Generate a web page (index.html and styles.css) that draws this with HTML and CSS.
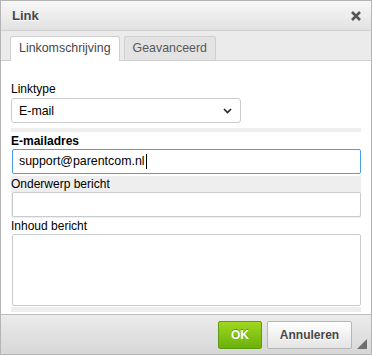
FILE: index.html
```html
<!DOCTYPE html>
<html lang="nl">
  <head>
    <meta charset="UTF-8" />
    <title>Link</title>
    <link rel="stylesheet" href="styles.css">
  </head>
  <body>
    <div class="dialog">
      <div class="titlebar">
        <span class="title">Link</span>
        <svg class="close" width="10" height="10" viewBox="0 0 10 10">
          <path d="M1 1 L9 9 M9 1 L1 9" stroke="#555" stroke-width="2.6" />
        </svg>
      </div>
      <div class="tabs">
        <div class="tab active">Linkomschrijving</div>
        <div class="tab">Geavanceerd</div>
      </div>
      <div class="content">
        <label class="lbl">Linktype</label>
        <div class="select">
          <span>E-mail</span>
          <svg width="9" height="6" viewBox="0 0 9 6">
            <path d="M1 1 L4.5 4.5 L8 1" fill="none" stroke="#222" stroke-width="1.6" />
          </svg>
        </div>
        <div class="group">
          <div class="row white">
            <label class="lbl bold">E-mailadres</label>
            <div class="field focus">support@parentcom.nl<span class="caret"></span></div>
          </div>
          <div class="row">
            <label class="lbl">Onderwerp bericht</label>
            <input class="field" type="text" />
          </div>
          <div class="row white last">
            <label class="lbl">Inhoud bericht</label>
            <textarea class="field area"></textarea>
          </div>
        </div>
      </div>
      <div class="footer">
        <button class="btn ok">OK</button>
        <button class="btn cancel">Annuleren</button>
        <div class="grip"></div>
      </div>
    </div>
  </body>
</html>
```

FILE: styles.css
```css
body {
  margin: 0;
  font-family: "Liberation Sans", Arial, sans-serif;
  font-size: 12px;
  color: #000;
}
.dialog {
  width: 372px;
  height: 355px;
  box-sizing: border-box;
  border: 1px solid #b4b4b4;
  display: flex;
  flex-direction: column;
  background: #fff;
}
.titlebar {
  height: 29px;
  border-bottom: 1px solid #d0d0d0;
  background: linear-gradient(#f7f7f7, #e2e2e2);
  display: flex;
  align-items: center;
  justify-content: space-between;
  padding: 0 10px 0 11px;
}
.title {
  font-size: 13px;
  font-weight: bold;
  color: #474747;
  text-shadow: 0 1px 0 #fff;
}
.tabs {
  height: 24px;
  padding: 5px 0 0 9px;
  background: #ebebeb;
  border-bottom: 1px solid #cfcfcf;
  display: flex;
  gap: 4px;
}
.tab {
  height: 23px;
  line-height: 23px;
  padding: 0 8px;
  border: 1px solid #cfcfcf;
  border-bottom: none;
  border-radius: 3px 3px 0 0;
  background: #e3e3e3;
  color: #595959;
  font-size: 12.4px;
}
.tab.active {
  height: 24px;
  background: #fff;
  color: #474747;
  margin-bottom: -1px;
}
.content {
  flex: 1;
  padding: 21px 10px 0 10px;
}
.lbl {
  display: block;
  line-height: 14px;
  color: #000;
}
.bold {
  font-weight: bold;
}
.select {
  margin-top: 2px;
  width: 230px;
  height: 25px;
  box-sizing: border-box;
  border: 1px solid #c9cccf;
  border-radius: 3px;
  display: flex;
  align-items: center;
  justify-content: space-between;
  padding: 0 8px 0 7px;
  font-size: 12.4px;
}
.group {
  margin-top: 5px;
  background: #eee;
  padding: 4px 0 5px 0;
}
.row {
  padding: 1px 0;
}
.row.white {
  background: #fff;
  padding: 2px 0;
}
.row.last {
  padding: 1px 0;
}
.field {
  display: block;
  margin: 1px 0 0 1px;
  width: 349px;
  height: 25px;
  box-sizing: border-box;
  border: 1px solid #c9cccf;
  border-radius: 2px;
  background: #fff;
  padding: 0 6px;
  font-family: "Liberation Sans", Arial, sans-serif;
  font-size: 12.4px;
  outline: none;
}
.focus {
  border-color: #4a9fe4;
  line-height: 23px;
  display: flex;
  align-items: center;
}
.caret {
  display: inline-block;
  width: 1px;
  height: 15px;
  background: #000;
  margin-left: 1px;
}
.area {
  height: 72px;
  resize: none;
  margin-top: 1px;
}
.footer {
  position: relative;
  height: 40px;
  box-sizing: border-box;
  border-top: 1px solid #bdbdbd;
  background: linear-gradient(#ebebeb, #d7d7d7);
  display: flex;
  justify-content: flex-end;
  align-items: flex-start;
  gap: 5px;
  padding: 6px 19px 0 0;
}
.btn {
  height: 28px;
  border-radius: 2px;
  font-family: "Liberation Sans", Arial, sans-serif;
  font-size: 12px;
  font-weight: bold;
  cursor: pointer;
}
.ok {
  width: 44px;
  border: 1px solid #5d9b0e;
  background: linear-gradient(#9fd81f, #6bb00c);
  color: #fff;
  text-shadow: 0 -1px 0 #5a8f12;
}
.cancel {
  width: 85px;
  border: 1px solid #b6b6b6;
  background: linear-gradient(#fff, #e4e4e4);
  color: #474747;
  text-shadow: 0 1px 0 #fff;
}
.grip {
  position: absolute;
  right: 4px;
  bottom: 5px;
  width: 0;
  height: 0;
  border-left: 10px solid transparent;
  border-bottom: 10px solid #6f6f6f;
}
```
